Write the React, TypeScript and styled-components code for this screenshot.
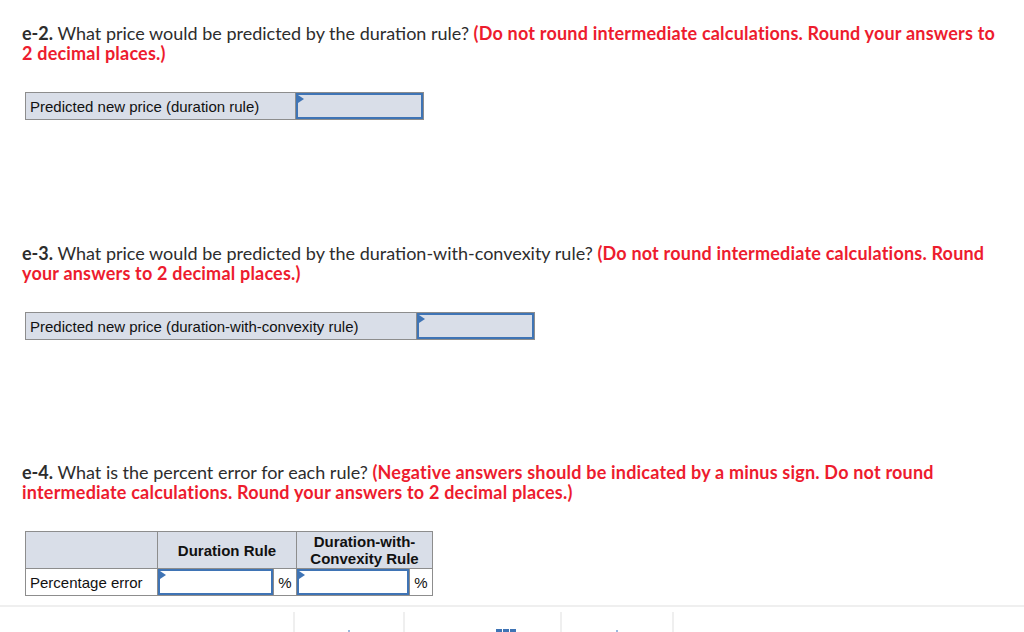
import React from 'react';
import styled, { createGlobalStyle } from 'styled-components';

const Global = createGlobalStyle`
  html, body {
    margin: 0;
    padding: 0;
    background: #fff;
    overflow: hidden;
  }
  body {
    width: 1024px;
    height: 632px;
  }
`;

const Page = styled.div`
  width: 1024px;
  height: 632px;
  overflow: hidden;
  display: flex;
  flex-direction: column;
`;

const Content = styled.div`
  padding: 23px 0 0 22px;
  flex: 1;
`;

const Part = styled.section<{ $gap: number }>`
  margin-bottom: ${p => p.$gap}px;
`;

const Question = styled.p`
  margin: 0 0 29px 0;
  width: 980px;
  font-family: Lato, "Open Sans", sans-serif;
  font-size: 18px;
  line-height: 20px;
  color: #2d2d2d;
  > b {
    font-weight: 700;
  }
  > .note {
    color: #ed1c2e;
    font-weight: 700;
    letter-spacing: 0.2px;
  }
`;

const Table = styled.table`
  border-collapse: collapse;
  margin-left: 3px;
  font-family: "Liberation Sans", Arial, sans-serif;
  font-size: 15px;
  color: #111;
  td, th {
    border: 1px solid #8d8d8d;
    padding: 0;
  }
`;

const LabelCell = styled.td<{ $w: number; $bg?: string }>`
  width: ${p => p.$w}px;
  height: 26px;
  background: ${p => p.$bg || '#d9dee8'};
  padding: 0 4px !important;
  text-align: left;
  vertical-align: middle;
`;

const HeadCell = styled.th<{ $w: number }>`
  width: ${p => p.$w}px;
  height: 36px;
  background: #d9dee8;
  font-weight: 700;
  font-size: 15px;
  line-height: 17px;
  text-align: center;
  vertical-align: middle;
`;

const InputCell = styled.td<{ $w: number }>`
  width: ${p => p.$w}px;
  height: 26px;
  position: relative;
`;

const Field = styled.div<{ $bg: string }>`
  box-sizing: border-box;
  height: 26px;
  width: 100%;
  border: 2px solid #3f74b5;
  background: ${p => p.$bg};
  position: relative;
  &::before {
    content: '';
    position: absolute;
    left: 0;
    top: 0;
    border-top: 4px solid transparent;
    border-bottom: 4px solid transparent;
    border-left: 6px solid #3f74b5;
  }
`;

const UnitCell = styled.td`
  width: 22px;
  height: 26px;
  text-align: center;
  background: #fff;
`;

const Footer = styled.nav`
  height: 20px;
  border-top: 2px solid #efefef;
  display: flex;
  padding-top: 5px;
`;

const FooterCell = styled.div<{ $w: number; $edge?: boolean }>`
  width: ${p => p.$w}px;
  border-left: ${p => (p.$edge ? '2px solid #efefef' : 'none')};
  display: flex;
  justify-content: center;
  align-items: flex-end;
  overflow: hidden;
`;

const Squares = styled.div`
  display: flex;
  gap: 1px;
  margin-bottom: -3px;
  margin-left: 48px;
  > span {
    width: 6px;
    height: 6px;
    background: #3f74b5;
  }
`;

const Tick = styled.span`
  width: 2px;
  height: 2px;
  background: #9ab8de;
`;

function InputBox({ w, bg }: { w: number; bg: string }) {
  return (
    <InputCell $w={w}>
      <Field $bg={bg} />
    </InputCell>
  );
}

export default function App() {
  return (
    <Page>
      <Global />
      <Content>
        <Part $gap={123}>
          <Question>
            <b>e-2.</b> What price would be predicted by the duration rule?{' '}
            <span className="note">
              (Do not round intermediate calculations. Round your answers to 2 decimal places.)
            </span>
          </Question>
          <Table>
            <tbody>
              <tr>
                <LabelCell $w={261}>Predicted new price (duration rule)</LabelCell>
                <InputBox w={127} bg="#d9dee8" />
              </tr>
            </tbody>
          </Table>
        </Part>

        <Part $gap={122}>
          <Question>
            <b>e-3.</b> What price would be predicted by the duration-with-convexity rule?{' '}
            <span className="note">
              (Do not round intermediate calculations. Round your answers to 2 decimal places.)
            </span>
          </Question>
          <Table>
            <tbody>
              <tr>
                <LabelCell $w={382}>Predicted new price (duration-with-convexity rule)</LabelCell>
                <InputBox w={117} bg="#d9dee8" />
              </tr>
            </tbody>
          </Table>
        </Part>

        <Part $gap={0}>
          <Question>
            <b>e-4.</b> What is the percent error for each rule?{' '}
            <span className="note">
              (Negative answers should be indicated by a minus sign. Do not round intermediate
              calculations. Round your answers to 2 decimal places.)
            </span>
          </Question>
          <Table>
            <tbody>
              <tr>
                <HeadCell $w={131} />
                <HeadCell $w={138} colSpan={2}>Duration Rule</HeadCell>
                <HeadCell $w={135} colSpan={2}>
                  Duration-with-
                  <br />
                  Convexity Rule
                </HeadCell>
              </tr>
              <tr>
                <LabelCell $w={123} $bg="#fff">Percentage error</LabelCell>
                <InputBox w={114} bg="#fff" />
                <UnitCell>%</UnitCell>
                <InputBox w={112} bg="#fff" />
                <UnitCell>%</UnitCell>
              </tr>
            </tbody>
          </Table>
        </Part>
      </Content>

      <Footer>
        <FooterCell $w={295} />
        <FooterCell $w={109} $edge>
          <Tick />
        </FooterCell>
        <FooterCell $w={156} $edge>
          <Squares>
            <span />
            <span />
            <span />
          </Squares>
        </FooterCell>
        <FooterCell $w={111} $edge>
          <Tick />
        </FooterCell>
        <FooterCell $w={353} $edge />
      </Footer>
    </Page>
  );
}
